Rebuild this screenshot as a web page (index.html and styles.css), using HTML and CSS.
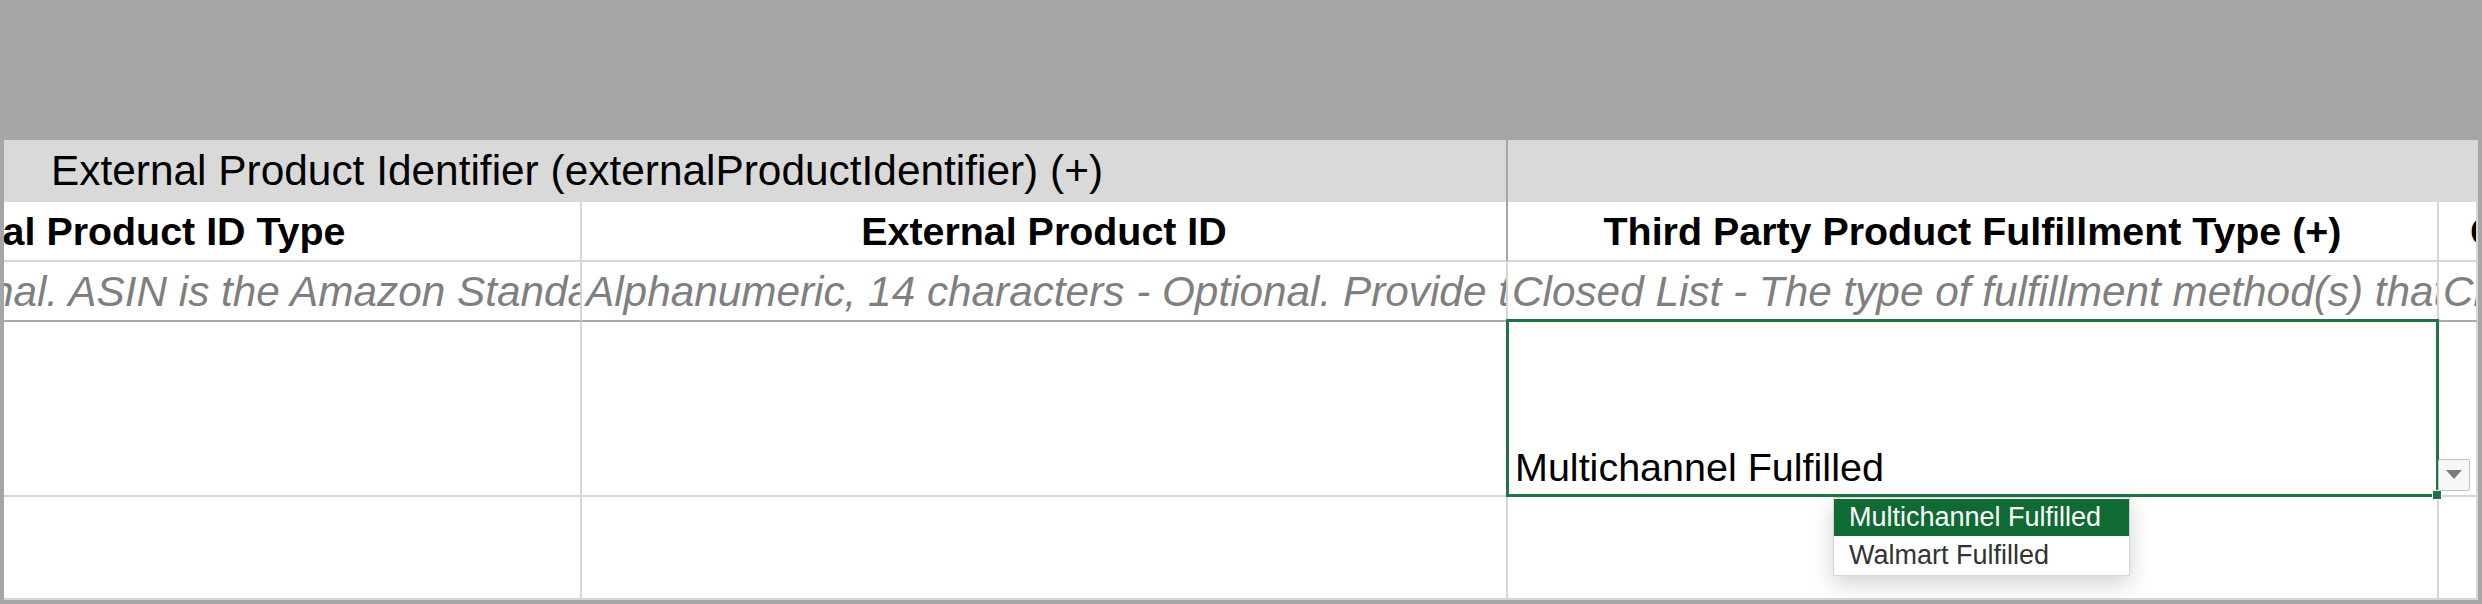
FILE: index.html
```html
<!DOCTYPE html>
<html lang="en">
<head>
    <meta charset="UTF-8">
    <title>Walmart item template</title>
    <link rel="stylesheet" href="styles.css">
</head>
<body>
<div class="sheet">
    <div class="group">External Product Identifier (externalProductIdentifier) (+)</div>
    <div class="group rest"></div>

    <div class="cell head col-a">External Product ID Type</div>
    <div class="cell head col-b">External Product ID</div>
    <div class="cell head col-c">Third Party Product Fulfillment Type (+)</div>
    <div class="cell head col-d">Condition (+)</div>

    <div class="cell desc col-a">Closed List - Optional. ASIN is the Amazon Standard Identification Number</div>
    <div class="cell desc">Alphanumeric, 14 characters - Optional. Provide the external product identifier</div>
    <div class="cell desc">Closed List - The type of fulfillment method(s) that apply to this item</div>
    <div class="cell desc">Closed List - The condition of the item</div>

    <div class="cell"></div>
    <div class="cell"></div>
    <div class="cell selected">
        Multichannel Fulfilled
        <span class="fill-handle"></span>
        <span class="drop-btn">
            <svg width="16" height="10" viewBox="0 0 16 10"><polygon points="0,0 16,0 8,9" fill="#7b7b7b"/></svg>
        </span>
        <ul class="drop-list">
            <li class="current">Multichannel Fulfilled</li>
            <li>Walmart Fulfilled</li>
        </ul>
    </div>
    <div class="cell"></div>

    <div class="cell"></div>
    <div class="cell"></div>
    <div class="cell"></div>
    <div class="cell"></div>
</div>
</body>
</html>
```

FILE: styles.css
```css
*{
    margin: 0;
    padding: 0;
    box-sizing: border-box;
}
body{
    background: #a6a6a6;
    font-family: "Liberation Sans", Arial, sans-serif;
    color: #000;
}
.sheet{
    margin: 140px 4px 4px;
    height: 460px;
    background: #fff;
    display: grid;
    grid-template-columns: 578px 926px 931px 1fr;
    grid-template-rows: 62px 60px 60px 175px 103px;
    overflow: hidden;
}
.group{
    grid-column: 1 / 3;
    background: #d9d9d9;
    border-right: 2px solid #a6a6a6;
    font-size: 42.4px;
    line-height: 62px;
    padding-left: 47px;
    white-space: nowrap;
}
.group.rest{
    grid-column: 3 / 5;
    border-right: none;
}
.cell{
    border-right: 2px solid #d6d6d6;
    border-bottom: 2px solid #d6d6d6;
    white-space: nowrap;
    overflow: hidden;
}
.head{
    font-weight: bold;
    font-size: 39.4px;
    line-height: 58px;
    text-align: center;
}
.head.col-a{
    text-align: left;
    text-indent: -124px;
}
.head.col-b{
    border-right-color: #a6a6a6;
}
.head.col-d{
    text-align: left;
    padding-left: 31px;
}
.desc{
    font-style: italic;
    color: #7f7f7f;
    font-size: 42.3px;
    line-height: 56px;
    padding: 2px 0 0 4px;
    border-bottom-color: #ababab;
}
.desc.col-a{
    padding-left: 0;
    text-indent: -362px;
}
.selected{
    position: relative;
    overflow: visible;
    display: flex;
    align-items: flex-end;
    padding: 0 0 8px 7px;
    font-size: 39.5px;
    line-height: 1;
}
.selected::after{
    content: "";
    position: absolute;
    left: -2px;
    top: -3px;
    right: -2px;
    bottom: -2px;
    border: 3px solid #217346;
}
.fill-handle{
    position: absolute;
    right: -5px;
    bottom: -5px;
    width: 10px;
    height: 10px;
    background: #217346;
    border: 1px solid #fff;
    z-index: 2;
}
.drop-btn{
    position: absolute;
    right: -33px;
    bottom: 4px;
    width: 32px;
    height: 32px;
    background: #f7f7f7;
    border: 1px solid #c4c4c4;
    border-radius: 2px;
    display: flex;
    align-items: center;
    justify-content: center;
    z-index: 2;
}
.drop-list{
    position: absolute;
    left: 325px;
    top: 175px;
    width: 297px;
    list-style: none;
    background: #fff;
    border: 1px solid #d3d3d3;
    padding: 1px 0;
    box-shadow: 0 8px 22px rgba(0, 0, 0, 0.18);
    font-size: 27px;
    z-index: 3;
}
.drop-list li{
    height: 38px;
    line-height: 38px;
    padding-left: 15px;
    color: #333;
}
.drop-list li.current{
    height: 37px;
    line-height: 37px;
    background: #0f6b33;
    color: #fff;
}
```
